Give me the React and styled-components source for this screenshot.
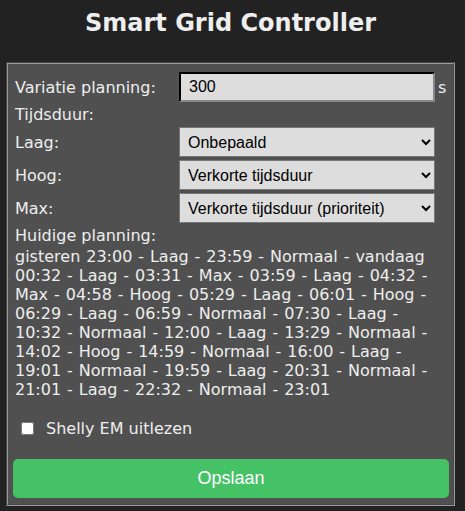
import React from "react";
import styled, { createGlobalStyle } from "styled-components";

const Global = createGlobalStyle`
  html, body {
    margin: 0;
    padding: 0;
    background: #222222;
    color: #eeeeee;
    font-family: "DejaVu Sans", Verdana, sans-serif;
    font-size: 16px;
  }
`;

const Page = styled.div`
  padding: 0 10px 0 6px;
`;

const Title = styled.h1`
  margin: 0;
  height: 62px;
  display: flex;
  align-items: center;
  justify-content: center;
  font-size: 24px;
  font-weight: bold;
  color: #eeeeee;
  padding-bottom: 17px;
  box-sizing: border-box;
`;

const Panel = styled.fieldset`
  margin: 0;
  border: 2px groove #9a9a9a;
  background: #505050;
  padding: 8px 4px 6px 5px;
  min-width: 0;
`;

const FormGrid = styled.div`
  display: grid;
  grid-template-columns: 164px 256px auto;
  align-items: center;
  row-gap: 3px;
  padding-left: 2px;
`;

const Label = styled.span`
  line-height: 19px;
`;

const TextInput = styled.input`
  box-sizing: border-box;
  width: 256px;
  height: 30px;
  background: #dddddd;
  border: 2px inset #767676;
  border-color: #222 #888 #888 #222;
  font-family: "Liberation Sans", Arial, sans-serif;
  font-size: 16px;
  padding: 0 8px;
  color: #000;
`;

const Unit = styled.span`
  padding-left: 3px;
  line-height: 19px;
`;

const Select = styled.select`
  box-sizing: border-box;
  width: 256px;
  height: 30px;
  background: #dddddd;
  border: 1px solid #777;
  border-radius: 0;
  font-family: "Liberation Sans", Arial, sans-serif;
  font-size: 16px;
  color: #000;
  padding: 0 4px;
`;

const Full = styled.div`
  grid-column: 1 / -1;
  line-height: 19px;
`;

const PlanningTitle = styled.div`
  line-height: 19px;
  margin-top: 3px;
  margin-bottom: 2px;
  padding-left: 2px;
`;

const Planning = styled.div`
  line-height: 19px;
  padding-left: 2px;
  word-spacing: 0.85px;
`;

const CheckRow = styled.label`
  display: flex;
  align-items: center;
  gap: 12px;
  margin: 18px 0 0 8px;
  height: 22px;
`;

const Check = styled.input`
  width: 13px;
  height: 13px;
  margin: 0;
  accent-color: #fff;
`;

const SaveButton = styled.button`
  display: block;
  width: 100%;
  height: 39px;
  margin-top: 20px;
  border: none;
  border-radius: 5px;
  background: #45c266;
  color: #ffffff;
  font-family: "Liberation Sans", Arial, sans-serif;
  font-size: 18px;
`;

const planning =
  "gisteren 23:00 - Laag - 23:59 - Normaal - vandaag 00:32 - Laag - 03:31 - Max - 03:59 - Laag - 04:32 - Max - 04:58 - Hoog - 05:29 - Laag - 06:01 - Hoog - 06:29 - Laag - 06:59 - Normaal - 07:30 - Laag - 10:32 - Normaal - 12:00 - Laag - 13:29 - Normaal - 14:02 - Hoog - 14:59 - Normaal - 16:00 - Laag - 19:01 - Normaal - 19:59 - Laag - 20:31 - Normaal - 21:01 - Laag - 22:32 - Normaal - 23:01";

export default function App() {
  return (
    <Page>
      <Global />
      <Title>Smart Grid Controller</Title>
      <Panel>
        <FormGrid>
          <Label>Variatie planning:</Label>
          <TextInput defaultValue="300" />
          <Unit>s</Unit>
          <Full>Tijdsduur:</Full>
          <Label>Laag:</Label>
          <Select defaultValue="onb">
            <option value="onb">Onbepaald</option>
          </Select>
          <span />
          <Label>Hoog:</Label>
          <Select defaultValue="vk">
            <option value="vk">Verkorte tijdsduur</option>
          </Select>
          <span />
          <Label>Max:</Label>
          <Select defaultValue="vkp">
            <option value="vkp">Verkorte tijdsduur (prioriteit)</option>
          </Select>
          <span />
        </FormGrid>
        <PlanningTitle>Huidige planning:</PlanningTitle>
        <Planning>{planning}</Planning>
        <CheckRow>
          <Check type="checkbox" />
          Shelly EM uitlezen
        </CheckRow>
        <SaveButton>Opslaan</SaveButton>
      </Panel>
    </Page>
  );
}
